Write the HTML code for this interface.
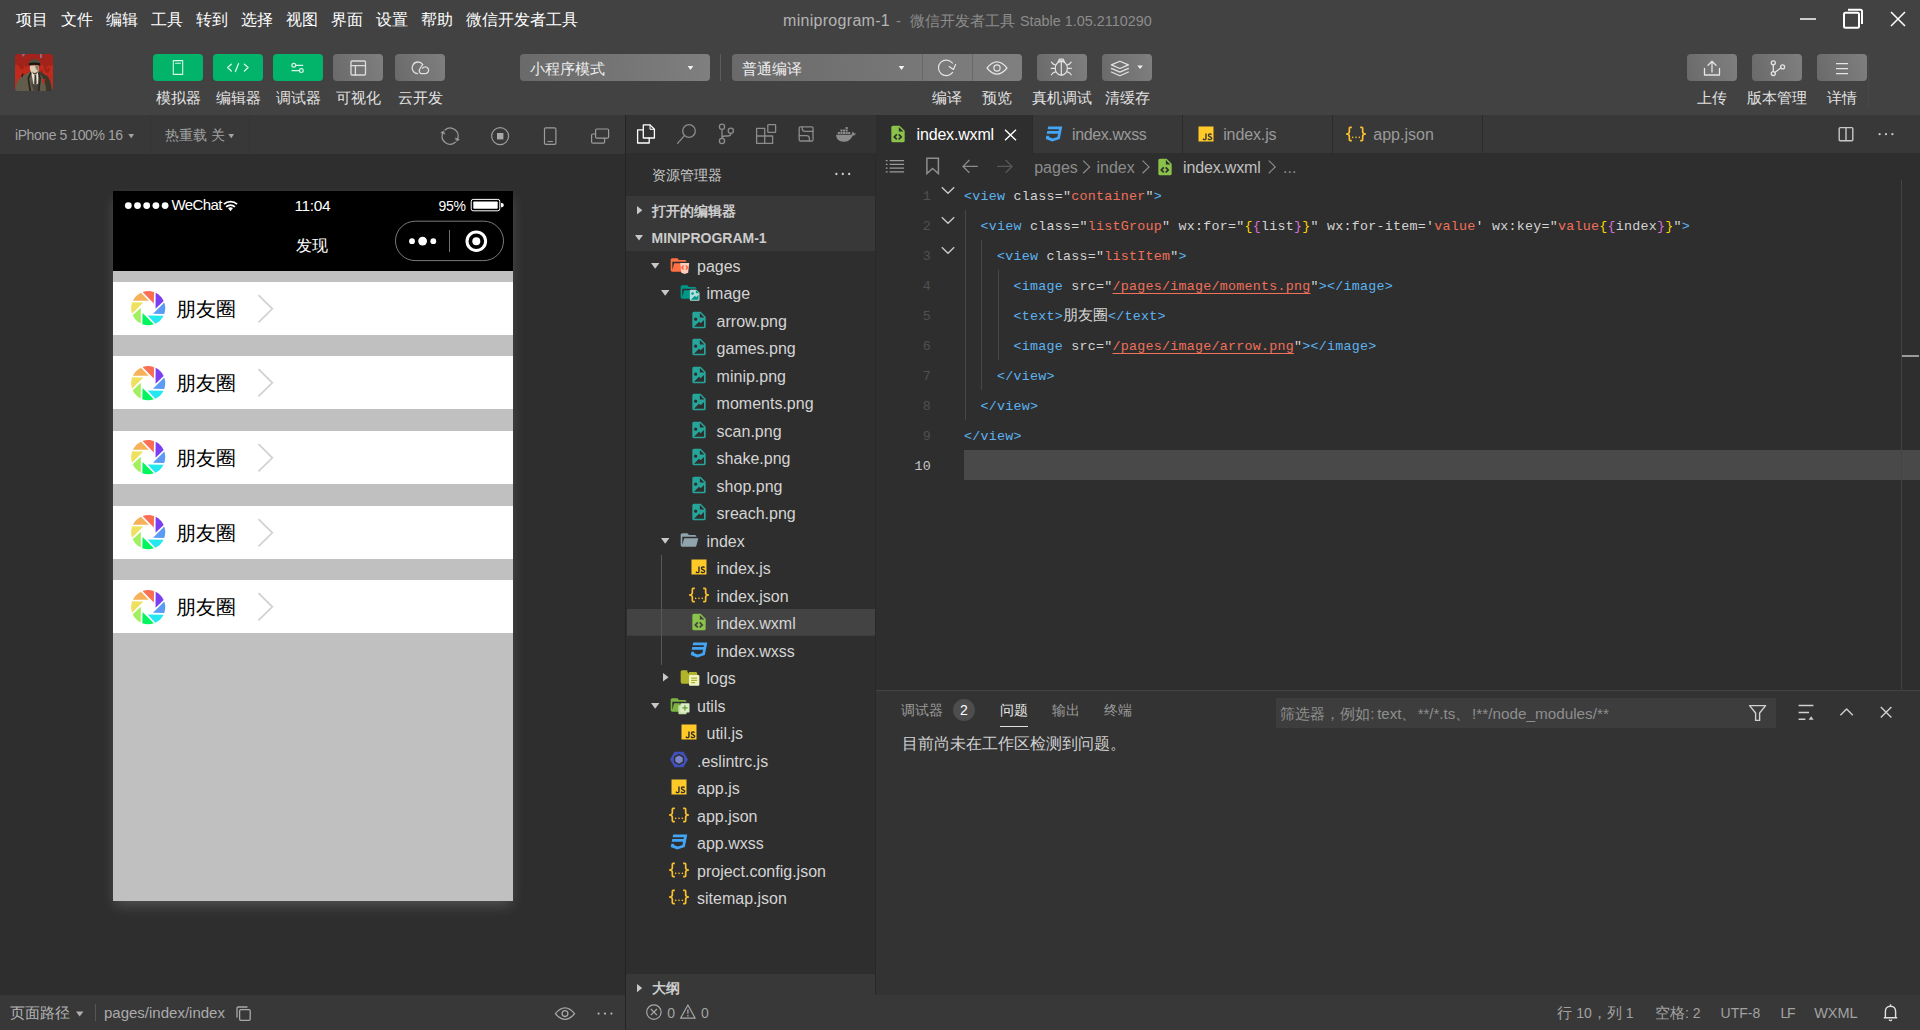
<!DOCTYPE html>
<html lang="zh">
<head>
<meta charset="utf-8">
<title>miniprogram-1</title>
<style>
*{box-sizing:border-box;margin:0;padding:0}
html,body{width:1920px;height:1030px;overflow:hidden;background:#2e2e2e}
body{font-family:"Liberation Sans",sans-serif;color:#d6d6d6;position:relative;font-size:15px}
.abs{position:absolute}
svg{display:block;overflow:visible}
/* top */
#top{position:absolute;left:0;top:0;width:1920px;height:115px;background:#424242}
.menu{position:absolute;top:9px;height:22px;line-height:22px;font-size:16px;color:#fff;white-space:nowrap}
#title{position:absolute;top:9px;left:782px;height:22px;line-height:22px;font-size:16px;color:#8c8c8c;white-space:nowrap}
#title b{font-weight:normal;color:#b4b4b4}
.tb{position:absolute;top:54px;width:50px;height:27px;border-radius:4px;background:linear-gradient(75deg,#6a6a6a,#7f7f7f)}
.tb.g{background:#02b36a}
.tl{position:absolute;top:88px;height:20px;line-height:20px;font-size:15px;color:#e2e2e2;white-space:nowrap;text-align:center}
.dd{position:absolute;top:54px;height:27px;background:linear-gradient(85deg,#6a6a6a,#7f7f7f);border-radius:4px;color:#eee;font-size:15px;line-height:30px;padding-left:10px}
/* simulator */
#simbar{position:absolute;left:0;top:115px;width:625px;height:39px;background:#383838}
#sim{position:absolute;left:0;top:154px;width:625px;height:841px;background:#2e2e2e}
#vsep{position:absolute;left:625px;top:115px;width:1.4px;height:915px;background:#242424}
#simfoot{position:absolute;left:0;top:995px;width:625px;height:35px;background:#383838}
/* phone */
#phone{position:absolute;left:113px;top:191px;width:400px;height:709.7px;background:#c0c0c0;box-shadow:0 6px 13px -2px rgba(255,255,255,.19)}
#phead{position:absolute;left:0;top:0;width:400px;height:80px;background:#000}
.li{position:absolute;left:0;width:400px;height:53px;background:#fff}
/* explorer */
#actbar{position:absolute;left:626px;top:115px;width:250px;height:38px;background:#333}
#exp{position:absolute;left:627px;top:154px;width:249px;height:841px}
#esep{position:absolute;left:875px;top:153px;width:1px;height:842px;background:#292929}
.row{position:absolute;left:0;width:248px;height:27.5px;line-height:29px;font-size:16px;color:#d4d4d4;white-space:nowrap}
.row.sel{background:linear-gradient(#434343,#434343) -1px -0.3px/250px 27px no-repeat}
/* editor */
#tabs{position:absolute;left:877px;top:115px;width:1043px;height:38px;background:#383838}
#editor{position:absolute;left:877px;top:153px;width:1043px;height:537px;background:#2e2e2e}
.ln{position:absolute;left:0;width:54px;text-align:right;font-family:"Liberation Mono",monospace;font-size:13.3333px;letter-spacing:.25px;color:#505050;height:30px;line-height:30px}
.cl{position:absolute;left:87px;height:30px;line-height:30px;font-family:"Liberation Mono",monospace;font-size:13.3333px;letter-spacing:.25px;white-space:pre;color:#d4d4d4}
.t{color:#5cb3f0}.s{color:#f0705a}.a{color:#d4d4d4}.y{color:#ffd700}.p{color:#da70d6}
.tt{top:9px;line-height:22px;font-size:16px;color:#9a9a9a;white-space:nowrap}
.bc{top:5px;line-height:20px;font-size:16px;color:#8c8c8c;white-space:nowrap}
.ln.act{color:#c8c8c8}
.u{text-decoration:underline;text-underline-offset:3px;text-decoration-thickness:1px}
.cj{font-family:"Liberation Sans",sans-serif;font-size:15px;line-height:1px;letter-spacing:0;display:inline-block;width:45px;text-align-last:justify;white-space:nowrap}
.pt{top:8.5px;line-height:20px;font-size:14px;color:#9a9a9a;white-space:nowrap}
.ph{top:12.7px;line-height:20px;font-size:15px;color:#8e8e8e;white-space:nowrap}
.st{top:7.5px;line-height:20px;font-size:14px;color:#a2a2a2;white-space:nowrap}
.j{display:inline-block;text-align-last:justify;white-space:nowrap}
/* panel */
#panel{position:absolute;left:877px;top:690px;width:1043px;height:305px;background:#333;border-top:1px solid #444}
#status{position:absolute;left:627px;top:995px;width:1293px;height:35px;background:#383838}
</style>
</head>
<body>
<div id="top">
<span class="menu" style="left:16px"><span class="j" style="width:32px">项目</span></span>
<span class="menu" style="left:61px"><span class="j" style="width:32px">文件</span></span>
<span class="menu" style="left:106px"><span class="j" style="width:32px">编辑</span></span>
<span class="menu" style="left:151px"><span class="j" style="width:32px">工具</span></span>
<span class="menu" style="left:196px"><span class="j" style="width:32px">转到</span></span>
<span class="menu" style="left:241px"><span class="j" style="width:32px">选择</span></span>
<span class="menu" style="left:286px"><span class="j" style="width:32px">视图</span></span>
<span class="menu" style="left:331px"><span class="j" style="width:32px">界面</span></span>
<span class="menu" style="left:376px"><span class="j" style="width:32px">设置</span></span>
<span class="menu" style="left:421px"><span class="j" style="width:32px">帮助</span></span>
<span class="menu" style="left:466px"><span class="j" style="width:112px">微信开发者工具</span></span>
<span class="abs" style="left:783px;top:9.7px;line-height:22px;font-size:16px;letter-spacing:.3px;color:#b4b4b4;white-space:nowrap">miniprogram-1</span>
<span class="abs" style="left:896px;top:9.7px;line-height:22px;font-size:15px;color:#8c8c8c">-</span>
<span class="abs" style="left:910px;top:9.7px;line-height:22px;font-size:15px;color:#8c8c8c;white-space:nowrap"><span class="j" style="width:105px">微信开发者工具</span></span>
<span class="abs" style="left:1020px;top:9.7px;line-height:22px;font-size:14.4px;color:#8c8c8c;white-space:nowrap">Stable 1.05.2110290</span>
<!-- window controls -->
<svg class="abs" style="left:1795px;top:5px" width="120" height="30" viewBox="1795 5 120 30" fill="none" stroke="#fff" stroke-width="1.6">
<path d="M1800 19H1816" stroke="#ccc" stroke-width="2"/>
<rect x="1844" y="12.8" width="15" height="15" rx="1.5" stroke-width="2"/>
<path d="M1848 9.8H1860.5Q1862 9.8 1862 11.3V24" stroke-width="2"/>
<path d="M1891 12L1905 26M1905 12L1891 26" stroke-width="1.5"/>
</svg>
<!-- avatar -->
<svg class="abs" style="left:15px;top:54px" width="38" height="37" viewBox="0 0 38 37">
<defs><clipPath id="avc"><rect width="38" height="37" rx="3.2"/></clipPath><filter id="avb" x="-5%" y="-5%" width="110%" height="110%"><feGaussianBlur stdDeviation=".45"/></filter></defs>
<g clip-path="url(#avc)"><g filter="url(#avb)">
<rect x="-2" y="-2" width="42" height="41" fill="#bf2a1c"/>
<path d="M-1 -1H39V9Q36 14 33 11Q31 17 28 12Q26 8 23 9Q20 4 15 8Q12 16 9 11Q6 17 4 12Q2 9 -1 12Z" fill="#a2231a"/>
<path d="M5 10Q7 18 8 12M30 13Q32 22 34 14M26 16Q28 24 33 22" stroke="#9c2219" stroke-width="2" fill="none"/>
<path d="M6 -1H11L8 3ZM25 0H27V4H25Z" fill="#8a86b8" opacity=".7"/>
<path d="M0 37L1.5 30Q3 24.5 7 22.5L15.5 17.5L17 16H23L24.5 17.5Q31 21 33.5 23.5Q36 27 37.5 37Z" fill="#625d4b"/>
<path d="M24 17.5Q31 21 33.5 23.5Q36 28 37 37H31Q31 26 24 19Z" fill="#3b352b"/>
<path d="M7 22.5L8 19.5L6.8 23Z" fill="#1c1814" stroke="#1c1814" stroke-width="1.2"/>
<path d="M16.2 18.5L18.5 30H22.8L23.6 18.5Z" fill="#ece5d6"/>
<path d="M19.6 20.6H21.2L21.6 29.6L20.4 30.4L19.2 29.6Z" fill="#3a3832"/>
<path d="M15.8 28L18.8 37H24L25.4 27L22 31H19Z" fill="#47433a"/>
<path d="M15.6 17.6L12.4 24L14.2 37H16.2L14.2 24.5L16.6 19.5Z" fill="#2c2820"/>
<path d="M23.8 17.6L26 24L24.6 37H23L24.4 25L23 19.6Z" fill="#2c2820"/>
<path d="M15 11.5Q14.2 16 17 19Q20 21.2 22.6 19Q24.2 16 23.8 11.5Z" fill="#d9cdb6"/>
<path d="M17.2 17.4Q20 20.6 22.8 17.2Q23 19.6 20 20.6Q17.4 20 17.2 17.4Z" fill="#5d4634"/>
<path d="M20 11.5H23.8Q24 14 23 17L21 15Z" fill="#8d7c66"/>
<path d="M13.8 11.4Q13.4 7.4 16.4 6Q20 4.6 23.6 6.2Q25.6 7.6 25.4 11Q19.6 9.4 13.8 11.4Z" fill="#4d4c3e"/>
<path d="M13.8 11.6Q13.4 9.4 14.6 9Q19.6 7.8 25 9.2Q25.8 10.2 25.2 11.8Q19.6 9.8 13.8 11.6Z" fill="#15140f"/>
<path d="M27 25L31 25.4L29 27.6L30 30L27.8 29.4L27.4 27Z" fill="#c62a1e"/>
</g></g>
</svg>
<!-- left buttons -->
<div class="tb g" style="left:153px"></div>
<div class="tb g" style="left:213px"></div>
<div class="tb g" style="left:273px"></div>
<div class="tb" style="left:333px"></div>
<div class="tb" style="left:395px"></div>
<svg class="abs" style="left:150px;top:50px" width="300" height="35" viewBox="150 50 300 35" fill="none" stroke="#fff" stroke-width="1.2" stroke-linecap="round" stroke-linejoin="round">
<g stroke="#d9f5e8">
<rect x="173.3" y="60.6" width="9.4" height="13.8" stroke-width="1.1"/>
<path d="M175.5 63.3H180.5" stroke-width="1.1"/>
<path d="M231.3 64.2L227.6 67.6L231.3 71M238.6 63.6L235.4 71.6M244.4 64.2L248.1 67.6L244.4 71" stroke-width="1.3"/>
<circle cx="293.8" cy="65.3" r="1.9"/><path d="M295.8 65.3H302.8"/>
<circle cx="301.3" cy="70.6" r="1.9"/><path d="M292 70.6H299.3"/>
</g>
<g stroke="#dcdcdc">
<rect x="351" y="61" width="14.5" height="14" rx="1" stroke-width="1.3"/>
<path d="M351 65.6H365.5M355.4 65.6V75" stroke-width="1.3"/>
<path d="M417.5 73.6A5.8 5.8 0 1 1 422.8 64.6Q421 66.5 419.5 69.5Q418.6 72.5 421 73.6H425.3A3.4 3.4 0 1 0 422.5 68.2" stroke-width="1.3"/>
</g>
</svg>
<span class="tl" style="left:148px;width:60px"><span class="j" style="width:45px">模拟器</span></span>
<span class="tl" style="left:208px;width:60px"><span class="j" style="width:45px">编辑器</span></span>
<span class="tl" style="left:268px;width:60px"><span class="j" style="width:45px">调试器</span></span>
<span class="tl" style="left:328px;width:60px"><span class="j" style="width:45px">可视化</span></span>
<span class="tl" style="left:390px;width:60px"><span class="j" style="width:45px">云开发</span></span>
<!-- dropdowns -->
<div class="dd" style="left:520px;width:190px"><span class="j" style="width:75px">小程序模式</span></div>
<div class="abs" style="left:720px;top:54px;width:1px;height:27px;background:#5c5c5c"></div>
<div class="dd" style="left:732px;width:290px"><span class="j" style="width:60px">普通编译</span></div>
<div class="abs" style="left:922px;top:54px;width:1px;height:27px;background:#686868"></div>
<div class="abs" style="left:972px;top:54px;width:1px;height:27px;background:#686868"></div>
<div class="tb" style="left:1037px"></div>
<div class="tb" style="left:1102px"></div>
<svg class="abs" style="left:680px;top:50px" width="480" height="35" viewBox="680 50 480 35" fill="none" stroke="#e4e4e4" stroke-width="1.2" stroke-linecap="round" stroke-linejoin="round">
<path d="M687.7 66H693.3L690.5 70Z" fill="#f2f2f2" stroke="none"/>
<path d="M898.7 66H904.3L901.5 70Z" fill="#f2f2f2" stroke="none"/>
<path d="M1137.3 65.5H1142.9L1140.1 69Z" fill="#f2f2f2" stroke="none"/>
<!-- refresh -->
<path d="M952.6 72.4A7.8 7.8 0 1 1 952.4 63"/>
<path d="M949.2 66.6L953.4 69.4L955.6 64.6"/>
<!-- eye -->
<path d="M987 68Q992 61.8 997 61.8Q1002 61.8 1007 68Q1002 74.2 997 74.2Q992 74.2 987 68Z"/>
<circle cx="997" cy="68" r="3.1"/>
<!-- bug -->
<ellipse cx="1061.3" cy="68.3" rx="6.1" ry="6.9"/>
<path d="M1061.3 61.4V75.2"/>
<path d="M1058 62.2L1059.4 59.2H1063.2L1064.6 62.2M1058.6 60.9H1064"/>
<path d="M1055.6 65Q1053 64.6 1051.4 62.2M1055.2 68.3H1051.2M1055.6 71.8Q1053 72.2 1051.4 74.8M1067 65Q1069.6 64.6 1071.2 62.2M1067.4 68.3H1071.4M1067 71.8Q1069.6 72.2 1071.2 74.8"/>
<!-- layers -->
<path d="M1119.9 61.3L1128.4 64.9L1119.9 68.5L1111.4 64.9Z"/>
<path d="M1111.4 68.4L1119.9 72.1L1128.4 68.4M1111.4 72L1119.9 75.7L1128.4 72"/>
</svg>
<span class="tl" style="left:917px;width:60px"><span class="j" style="width:30px">编译</span></span>
<span class="tl" style="left:967px;width:60px"><span class="j" style="width:30px">预览</span></span>
<span class="tl" style="left:1022px;width:80px"><span class="j" style="width:60px">真机调试</span></span>
<span class="tl" style="left:1097px;width:60px"><span class="j" style="width:45px">清缓存</span></span>
<!-- right buttons -->
<div class="tb" style="left:1687px"></div>
<div class="tb" style="left:1752px"></div>
<div class="tb" style="left:1817px"></div>
<div class="abs" style="left:1868px;top:54px;width:1px;height:53px;background:#484848"></div>
<svg class="abs" style="left:1680px;top:50px" width="200" height="35" viewBox="1680 50 200 35" fill="none" stroke="#e4e4e4" stroke-width="1.3" stroke-linecap="round" stroke-linejoin="round">
<path d="M1704.5 68.5V75H1719.5V68.5"/>
<path d="M1712 72V61.5M1708 65.3L1712 61.3L1716 65.3"/>
<circle cx="1773.3" cy="62.8" r="2"/><circle cx="1773.3" cy="73.6" r="2"/><circle cx="1782.6" cy="66.9" r="2"/>
<path d="M1773.3 64.8V71.6M1774.9 72.4L1780.8 67.9"/>
<path d="M1836 63.7H1848M1836 68.7H1848M1836 73.7H1848" stroke-linecap="butt"/>
</svg>
<span class="tl" style="left:1682px;width:60px"><span class="j" style="width:30px">上传</span></span>
<span class="tl" style="left:1737px;width:80px"><span class="j" style="width:60px">版本管理</span></span>
<span class="tl" style="left:1812px;width:60px"><span class="j" style="width:30px">详情</span></span>
</div>
<div id="simbar">
<span class="abs" style="left:15px;top:10px;line-height:20px;font-size:14px;letter-spacing:-.42px;color:#a2a2a2;white-space:nowrap">iPhone 5 100% 16</span>
<span class="abs" style="left:165px;top:10px;line-height:20px;font-size:14px;color:#a2a2a2;white-space:nowrap"><span class="j" style="width:42px">热重载</span> <span class="j" style="width:14px">关</span></span>
<div class="abs" style="left:150px;top:0;width:1px;height:39px;background:#343434"></div>
<div class="abs" style="left:249px;top:0;width:1px;height:39px;background:#343434"></div>
<svg class="abs" style="left:0;top:0" width="625" height="39" viewBox="0 115 625 39" fill="none" stroke="#9c9c9c" stroke-width="1.2" stroke-linecap="round" stroke-linejoin="round">
<path d="M128.3 134H134.1L131.2 138.3Z" fill="#a2a2a2" stroke="none"/>
<path d="M228.3 134H234.1L231.2 138.3Z" fill="#a2a2a2" stroke="none"/>
<!-- refresh -->
<path d="M444.96 129.97A8 8 0 0 1 457.62 138.84M455.24 142.23A8 8 0 0 1 442.58 133.36"/>
<path d="M456.85 141.1L459.4 139.5L455.7 138.1ZM443.33 131.1L440.8 132.66L444.5 134.06Z" fill="#9c9c9c" stroke-width=".6"/>
<!-- stop -->
<circle cx="500.1" cy="136.1" r="8.5"/>
<rect x="497" y="133" width="6.4" height="6.4" fill="#a8a8a8" stroke="none"/>
<!-- phone -->
<rect x="544.5" y="127.8" width="11.4" height="16.6" rx="1.4"/>
<path d="M548 141.5H552.4"/>
<!-- windows -->
<path d="M595.4 143.2H592.8Q591.6 143.2 591.6 142V135.2Q591.6 134 592.8 134H595.4M604.6 138.4V142Q604.6 143.2 603.4 143.2H595.4"/>
<rect x="595.6" y="129" width="13" height="9.2" rx="1.2"/>
</svg>
</div>
<div id="sim"></div>
<div id="simfoot">
<span class="abs" style="left:10px;top:7.8px;line-height:20px;font-size:15px;color:#b4b4b4;white-space:nowrap"><span class="j" style="width:60px">页面路径</span></span>
<div class="abs" style="left:95px;top:9px;width:1px;height:17px;background:#555"></div>
<span class="abs" style="left:104px;top:7.8px;line-height:20px;font-size:15px;color:#ababab;white-space:nowrap">pages/index/index</span>
<svg class="abs" style="left:0;top:0" width="625" height="35" viewBox="0 995 625 35" fill="none" stroke="#a8a8a8" stroke-width="1.3" stroke-linecap="round" stroke-linejoin="round">
<path d="M76 1011.5H83.4L79.7 1016.5Z" fill="#b0b0b0" stroke="none"/>
<rect x="239.6" y="1009.6" width="10.6" height="10.8" rx="1.4"/>
<path d="M237 1017V1008.2Q237 1007 238.2 1007H247"/>
<path d="M555.4 1013.6Q560 1007.8 565 1007.8Q570 1007.8 574.6 1013.6Q570 1019.4 565 1019.4Q560 1019.4 555.4 1013.6Z"/>
<circle cx="565" cy="1013.6" r="2.9"/>
<g fill="#b4b4b4" stroke="none"><circle cx="598.6" cy="1013.6" r="1.1"/><circle cx="605" cy="1013.6" r="1.1"/><circle cx="611.4" cy="1013.6" r="1.1"/></g>
</svg>
</div>
<div id="phone">
<svg width="0" height="0" style="position:absolute"><defs>
<g id="mom"><path d="M-5.7 -16.4A17.4 17.4 0 0 1 6 -16.3L5.7 -4.9Z" fill="#fb6e52" transform="rotate(0)"/><path d="M-5.7 -16.4A17.4 17.4 0 0 1 6 -16.3L5.7 -4.9Z" fill="#7b3ff2" transform="rotate(45)"/><path d="M-5.7 -16.4A17.4 17.4 0 0 1 6 -16.3L5.7 -4.9Z" fill="#5b9bf5" transform="rotate(90)"/><path d="M-5.7 -16.4A17.4 17.4 0 0 1 6 -16.3L5.7 -4.9Z" fill="#24e8f0" transform="rotate(135)"/><path d="M-5.7 -16.4A17.4 17.4 0 0 1 6 -16.3L5.7 -4.9Z" fill="#00f55f" transform="rotate(180)"/><path d="M-5.7 -16.4A17.4 17.4 0 0 1 6 -16.3L5.7 -4.9Z" fill="#a0f060" transform="rotate(225)"/><path d="M-5.7 -16.4A17.4 17.4 0 0 1 6 -16.3L5.7 -4.9Z" fill="#eee160" transform="rotate(270)"/><path d="M-5.7 -16.4A17.4 17.4 0 0 1 6 -16.3L5.7 -4.9Z" fill="#f5b25a" transform="rotate(315)"/></g>
</defs></svg>
<div id="phead">
<svg class="abs" style="left:0;top:0" width="400" height="80" viewBox="113 191 400 80" fill="#fff">
<circle cx="128.3" cy="205.6" r="3.4"/><circle cx="137.5" cy="205.6" r="3.4"/><circle cx="146.7" cy="205.6" r="3.4"/><circle cx="155.9" cy="205.6" r="3.4"/><circle cx="165.1" cy="205.6" r="3.4"/>
<!-- wifi -->
<g fill="none" stroke="#fff" stroke-width="1.8" stroke-linecap="butt">
<path d="M223.9 204.1A10.15 10.15 0 0 1 237.1 204.1"/>
<path d="M226.1 206.8A6.4 6.4 0 0 1 234.9 206.8"/>
</g>
<path d="M228 208Q230.5 206.7 233 208L230.5 211.3Z"/>
<!-- battery -->
<rect x="471.2" y="199.4" width="28.6" height="11.4" rx="2" fill="none" stroke="#fff" stroke-width="1"/>
<rect x="473.3" y="201.5" width="24.4" height="7.2" rx=".8"/>
<path d="M501 203H502Q503.8 203.4 503.8 205.1Q503.8 206.8 502 207.2H501Z"/>
<!-- capsule -->
<rect x="395.5" y="221.2" width="108" height="39.4" rx="19.7" fill="none" stroke="#7a7a7a" stroke-width="1"/>
<circle cx="412" cy="241.2" r="2.9"/><circle cx="422.6" cy="241.1" r="4.4"/><circle cx="433.3" cy="241.2" r="2.9"/>
<path d="M449.5 230V252" stroke="#6e6e6e" stroke-width="1"/>
<circle cx="476.3" cy="241.2" r="9.3" fill="none" stroke="#fff" stroke-width="3"/>
<circle cx="476.3" cy="241.2" r="4"/>
</svg>
<span class="abs" style="left:58.5px;top:3.7px;line-height:20px;font-size:15px;letter-spacing:-.6px;color:#fff;white-space:nowrap">WeChat</span>
<span class="abs" style="left:181.5px;top:4.6px;line-height:20px;font-size:15.5px;letter-spacing:-.4px;color:#fff;white-space:nowrap">11:04</span>
<span class="abs" style="left:325.5px;top:5px;line-height:20px;font-size:14px;letter-spacing:-.3px;color:#fff;white-space:nowrap">95%</span>
<span class="abs" style="left:183.4px;top:44.2px;line-height:22px;font-size:16px;color:#fff;white-space:nowrap"><span class="j" style="width:32px">发现</span></span>
</div>
<div class="li" style="top:90.67px"><svg class="abs" style="left:18.2px;top:9.4px" width="34.4" height="34.4" viewBox="-17.5 -17.5 35 35"><use href="#mom"/></svg><span class="abs" style="left:63px;top:13px;line-height:28px;font-size:20px;color:#000;white-space:nowrap"><span class="j" style="width:60px">朋友圈</span></span><svg class="abs" style="left:143px;top:12px" width="18" height="30" viewBox="0 0 18 30" fill="none" stroke="#d2d2d2" stroke-width="1.8"><path d="M2.5 1.2L16.3 14.8L2.5 28.4"/></svg></div>
<div class="li" style="top:165.34px"><svg class="abs" style="left:18.2px;top:9.4px" width="34.4" height="34.4" viewBox="-17.5 -17.5 35 35"><use href="#mom"/></svg><span class="abs" style="left:63px;top:13px;line-height:28px;font-size:20px;color:#000;white-space:nowrap"><span class="j" style="width:60px">朋友圈</span></span><svg class="abs" style="left:143px;top:12px" width="18" height="30" viewBox="0 0 18 30" fill="none" stroke="#d2d2d2" stroke-width="1.8"><path d="M2.5 1.2L16.3 14.8L2.5 28.4"/></svg></div>
<div class="li" style="top:240.01px"><svg class="abs" style="left:18.2px;top:9.4px" width="34.4" height="34.4" viewBox="-17.5 -17.5 35 35"><use href="#mom"/></svg><span class="abs" style="left:63px;top:13px;line-height:28px;font-size:20px;color:#000;white-space:nowrap"><span class="j" style="width:60px">朋友圈</span></span><svg class="abs" style="left:143px;top:12px" width="18" height="30" viewBox="0 0 18 30" fill="none" stroke="#d2d2d2" stroke-width="1.8"><path d="M2.5 1.2L16.3 14.8L2.5 28.4"/></svg></div>
<div class="li" style="top:314.68px"><svg class="abs" style="left:18.2px;top:9.4px" width="34.4" height="34.4" viewBox="-17.5 -17.5 35 35"><use href="#mom"/></svg><span class="abs" style="left:63px;top:13px;line-height:28px;font-size:20px;color:#000;white-space:nowrap"><span class="j" style="width:60px">朋友圈</span></span><svg class="abs" style="left:143px;top:12px" width="18" height="30" viewBox="0 0 18 30" fill="none" stroke="#d2d2d2" stroke-width="1.8"><path d="M2.5 1.2L16.3 14.8L2.5 28.4"/></svg></div>
<div class="li" style="top:389.35px"><svg class="abs" style="left:18.2px;top:9.4px" width="34.4" height="34.4" viewBox="-17.5 -17.5 35 35"><use href="#mom"/></svg><span class="abs" style="left:63px;top:13px;line-height:28px;font-size:20px;color:#000;white-space:nowrap"><span class="j" style="width:60px">朋友圈</span></span><svg class="abs" style="left:143px;top:12px" width="18" height="30" viewBox="0 0 18 30" fill="none" stroke="#d2d2d2" stroke-width="1.8"><path d="M2.5 1.2L16.3 14.8L2.5 28.4"/></svg></div>
</div>
<div id="actbar">
<svg class="abs" style="left:0;top:0" width="250" height="39" viewBox="626 115 250 39" fill="none" stroke="#8c8c8c" stroke-width="1.3" stroke-linejoin="round" stroke-linecap="round">
<!-- files -->
<g stroke="#fff" stroke-width="1.3">
<path d="M643.3 124.9H650L654.4 129.3V138H643.3Z"/>
<path d="M650 124.9V129.3H654.4" stroke-width="1"/>
<path d="M643.3 129.9H637.6V143H649.2V138"/>
</g>
<!-- search -->
<circle cx="689" cy="131" r="6.3"/>
<path d="M684.4 135.6L677.6 143.4"/>
<!-- git -->
<circle cx="722" cy="126.8" r="2.6"/><circle cx="722" cy="141" r="2.6"/><circle cx="730.8" cy="130.8" r="2.6"/>
<path d="M722 129.4V138.4M730.8 133.4Q730.8 136 727.5 136H725Q722 136 722 138.4"/>
<!-- extensions -->
<path d="M756.6 128.4H764.7V143.4H756.6ZM756.6 136H772.6V143.4H764.7"/>
<rect x="767.8" y="124.6" width="7.8" height="7.8" rx=".6"/>
<!-- save-like -->
<rect x="799.2" y="126.8" width="13.8" height="14.2" rx="1.2"/>
<path d="M802.2 126.8V129Q802.4 131.4 805 131.4H813M799.2 135.6H806.6Q809.4 135.8 809.4 138.4V141"/>
<!-- docker -->
<g fill="#8c8c8c" stroke="none">
<path d="M836 134.8H851.2Q852.6 133.6 852.2 131.4Q853.6 132 854.2 133.4Q855.4 133 856 133.6Q855 135.8 852.6 135.8Q850 142 843.6 141.8Q836.6 141.8 836 134.8Z"/>
<rect x="837.8" y="132" width="2.1" height="2"/><rect x="840.4" y="132" width="2.1" height="2"/><rect x="843" y="132" width="2.1" height="2"/><rect x="845.6" y="132" width="2.1" height="2"/><rect x="848.2" y="132" width="2.1" height="2"/>
<rect x="840.4" y="129.5" width="2.1" height="2"/><rect x="843" y="129.5" width="2.1" height="2"/><rect x="845.6" y="129.5" width="2.1" height="2"/>
<rect x="845.6" y="127" width="2.1" height="2"/>
</g>
</svg>
</div>
<div id="exp">
<svg width="0" height="0" style="position:absolute"><defs>
<path id="i-img" d="M13 9h5.5L13 3.5V9M6 2h8l6 6v12a2 2 0 0 1-2 2H6a2 2 0 0 1-2-2V4c0-1.11.89-2 2-2m0 18h12v-8l-4 4-2-2-6 6M8 9a2 2 0 0 0-2 2 2 2 0 0 0 2 2 2 2 0 0 0 2-2 2 2 0 0 0-2-2z" fill="#26a69a"/>
<path id="i-js" d="M3 3h18v18H3V3m4.73 15.04c.4.85 1.19 1.55 2.54 1.55 1.5 0 2.53-.8 2.53-2.55v-5.78h-1.7V17c0 .86-.35 1.08-.9 1.08-.58 0-.82-.4-1.09-.87l-1.38.83m5.98-.18c.5.98 1.51 1.73 3.09 1.73 1.6 0 2.8-.83 2.8-2.36 0-1.41-.81-2.04-2.25-2.66l-.42-.18c-.73-.31-1.04-.52-1.04-1.02 0-.41.31-.73.81-.73.48 0 .8.21 1.09.73l1.31-.87c-.55-.96-1.33-1.33-2.4-1.33-1.51 0-2.48.96-2.48 2.23 0 1.38.81 2.03 2.03 2.55l.42.18c.78.34 1.24.55 1.24 1.13 0 .48-.45.83-1.15.83-.83 0-1.31-.43-1.67-1.03l-1.38.8z" fill="#ffca28"/>
<path id="i-json" d="M5 3h2v2H5v5a2 2 0 0 1-2 2 2 2 0 0 1 2 2v5h2v2H5c-1.07-.27-2-.9-2-2v-4a2 2 0 0 0-2-2H0v-2h1a2 2 0 0 0 2-2V5a2 2 0 0 1 2-2m14 0a2 2 0 0 1 2 2v4a2 2 0 0 0 2 2h1v2h-1a2 2 0 0 0-2 2v4a2 2 0 0 1-2 2h-2v-2h2v-5a2 2 0 0 1 2-2 2 2 0 0 1-2-2V5h-2V3h2m-7 12a1 1 0 0 1 1 1 1 1 0 0 1-1 1 1 1 0 0 1-1-1 1 1 0 0 1 1-1m-4 0a1 1 0 0 1 1 1 1 1 0 0 1-1 1 1 1 0 0 1-1-1 1 1 0 0 1 1-1m8 0a1 1 0 0 1 1 1 1 1 0 0 1-1 1 1 1 0 0 1-1-1 1 1 0 0 1 1-1z" fill="#fbc02d"/>
<path id="i-css" d="M5 3l-.65 3.34h13.59L17.5 8.5H3.92l-.66 3.33h13.59l-.76 3.81-5.48 1.81-4.75-1.81.33-1.64H2.85l-.79 4 7.85 3 9.05-3 1.2-6.03.24-1.21L21.94 3H5z" fill="#42a5f5"/>
<path id="i-xml" d="M13 9h5.5L13 3.5V9M6 2h8l6 6v12a2 2 0 0 1-2 2H6a2 2 0 0 1-2-2V4c0-1.11.89-2 2-2m.12 13.5l3.74 3.74 1.42-1.41-2.33-2.33 2.33-2.33-1.42-1.41-3.74 3.74m11.16 0l-3.74-3.74-1.42 1.41 2.33 2.33-2.33 2.33 1.42 1.41 3.74-3.74z" fill="#8bc34a"/>
<g id="i-eslint"><path d="M1.2 11.4L6.6 2.1H17.4L22.8 11.4L17.4 20.7H6.6Z" fill="#4250be"/><path d="M12 4.4L18.1 7.9V14.9L12 18.4L5.9 14.9V7.9Z" fill="#2e2e2e"/><path d="M12 6.5L16.5 9V13.9L12 16.4L7.5 13.9V9Z" fill="#7986cb"/></g>
<path id="f-open" d="M19 20H4a2 2 0 0 1-2-2V6c0-1.11.89-2 2-2h6l2 2h7a2 2 0 0 1 2 2H4v10l2.14-8h17.07l-2.28 8.5c-.23.87-1.01 1.5-1.93 1.5z"/>
<path id="f-closed" d="M10 4H4c-1.11 0-2 .89-2 2v12a2 2 0 0 0 2 2h16a2 2 0 0 0 2-2V8a2 2 0 0 0-2-2h-8l-2-2z"/>
<g id="f-pages"><path d="M17.5 20H4a2 2 0 0 1-2-2V6c0-1.11.89-2 2-2h6l2 2h7a2 2 0 0 1 2 2H4v10l2.14-8H21.5V20z" fill="#ff7043"/><path d="M13.5 9.6H24.2L23 21.2L18.9 22.8L14.7 21.2Z" fill="#ffccbc"/><path d="M17.5 12.6L15.4 15L17.5 17.4M20.3 12.6L22.4 15L20.3 17.4" fill="none" stroke="#ff5a2c" stroke-width="1.5"/></g>
<g id="f-image"><path d="M14 20H4a2 2 0 0 1-2-2V6c0-1.11.89-2 2-2h6l2 2h7a2 2 0 0 1 2 2H4v10l2.14-8H14V20z" fill="#009688"/><path d="M14.2 9.2H20.8L24.6 13V21.4Q24.6 22.6 23.4 22.6H14.2Q13 22.6 13 21.4V10.4Q13 9.2 14.2 9.2Z" fill="#b2dfdb"/><path d="M20.3 9.6V13.4H24.2Z" fill="#009688"/><circle cx="16.2" cy="13.8" r="1.5" fill="#009688"/><path d="M14.2 21.4L19 16.6L20.6 18.2L23.4 15.4V21.4Z" fill="#009688"/></g>
<g id="f-logs"><path d="M10 4H4c-1.11 0-2 .89-2 2v12a2 2 0 0 0 2 2h9V8H12l-2-2z" fill="#afb42b"/><path d="M12 6H20a2 2 0 0 1 2 2v2H12z" fill="#afb42b"/><rect x="12" y="9.6" width="12.4" height="12.8" rx="1.2" fill="#f0f4c3"/><path d="M14.6 13.4H21.8M14.6 16H21.8M14.6 18.6H19.4" stroke="#afb42b" stroke-width="1.5" fill="none"/></g>
<g id="f-utils"><path d="M13 20H4a2 2 0 0 1-2-2V6c0-1.11.89-2 2-2h6l2 2h7a2 2 0 0 1 2 2H4v10l2.14-8H13V20z" fill="#7cb342"/><rect x="11.2" y="12.4" width="10" height="10.6" rx="1" fill="#c5e1a5"/><rect x="13.6" y="9.8" width="11" height="11.2" rx="1" fill="#dcedc8"/><path d="M19.1 12.2V18.6M15.9 15.4H22.3" stroke="#689f38" stroke-width="1.6" fill="none"/></g>
</defs></svg>
<span class="abs" style="left:24.5px;top:11px;line-height:20px;font-size:14px;color:#ccc;white-space:nowrap"><span class="j" style="width:70px">资源管理器</span></span>
<svg class="abs" style="left:208px;top:18px" width="16" height="4" viewBox="0 0 16 4" fill="#d0d0d0"><circle cx="1.4" cy="2" r="1.15"/><circle cx="7.8" cy="2" r="1.15"/><circle cx="14.2" cy="2" r="1.15"/></svg>
<div class="abs" style="left:-1px;top:41.7px;width:249px;height:55.1px;background:#383838"></div>
<svg class="abs" style="left:10.2px;top:52px" width="6" height="9" viewBox="0 0 6 9"><path d="M0 0V8.6L5.4 4.3Z" fill="#c8c8c8"/></svg>
<span class="abs" style="left:24.5px;top:46.5px;line-height:20px;font-size:14px;font-weight:bold;color:#ccc;white-space:nowrap"><span class="j" style="width:84px">打开的编辑器</span></span>
<svg class="abs" style="left:8px;top:81.2px" width="9" height="6" viewBox="0 0 9 6"><path d="M0 0H8L4 5.6Z" fill="#c8c8c8"/></svg>
<span class="abs" style="left:24.5px;top:74px;line-height:20px;font-size:14px;font-weight:bold;color:#ccc;white-space:nowrap">MINIPROGRAM-1</span>
<div class="abs" style="left:34.2px;top:400.5px;width:1px;height:110px;background:#585858;z-index:2"></div>
<div class="row" style="top:97.50px"><svg class="abs" style="left:24.0px;top:11.3px" width="9" height="6" viewBox="0 0 9 6"><path d="M0 0H8.4L4.2 5.8Z" fill="#c8c8c8"/></svg><svg class="abs" style="left:41.9px;top:3.3px" width="20" height="20" viewBox="0 0 24 24"><use href="#f-pages"/></svg><span class="abs" style="left:70.0px;top:0">pages</span></div>
<div class="row" style="top:125.00px"><svg class="abs" style="left:34.0px;top:11.3px" width="9" height="6" viewBox="0 0 9 6"><path d="M0 0H8.4L4.2 5.8Z" fill="#c8c8c8"/></svg><svg class="abs" style="left:52.1px;top:3.3px" width="20" height="20" viewBox="0 0 24 24"><use href="#f-image"/></svg><span class="abs" style="left:79.5px;top:0">image</span></div>
<div class="row" style="top:152.50px"><svg class="abs" style="left:62.2px;top:3.3px" width="20" height="20" viewBox="0 0 24 24"><use href="#i-img"/></svg><span class="abs" style="left:89.6px;top:0">arrow.png</span></div>
<div class="row" style="top:180.00px"><svg class="abs" style="left:62.2px;top:3.3px" width="20" height="20" viewBox="0 0 24 24"><use href="#i-img"/></svg><span class="abs" style="left:89.6px;top:0">games.png</span></div>
<div class="row" style="top:207.50px"><svg class="abs" style="left:62.2px;top:3.3px" width="20" height="20" viewBox="0 0 24 24"><use href="#i-img"/></svg><span class="abs" style="left:89.6px;top:0">minip.png</span></div>
<div class="row" style="top:235.00px"><svg class="abs" style="left:62.2px;top:3.3px" width="20" height="20" viewBox="0 0 24 24"><use href="#i-img"/></svg><span class="abs" style="left:89.6px;top:0">moments.png</span></div>
<div class="row" style="top:262.50px"><svg class="abs" style="left:62.2px;top:3.3px" width="20" height="20" viewBox="0 0 24 24"><use href="#i-img"/></svg><span class="abs" style="left:89.6px;top:0">scan.png</span></div>
<div class="row" style="top:290.00px"><svg class="abs" style="left:62.2px;top:3.3px" width="20" height="20" viewBox="0 0 24 24"><use href="#i-img"/></svg><span class="abs" style="left:89.6px;top:0">shake.png</span></div>
<div class="row" style="top:317.50px"><svg class="abs" style="left:62.2px;top:3.3px" width="20" height="20" viewBox="0 0 24 24"><use href="#i-img"/></svg><span class="abs" style="left:89.6px;top:0">shop.png</span></div>
<div class="row" style="top:345.00px"><svg class="abs" style="left:62.2px;top:3.3px" width="20" height="20" viewBox="0 0 24 24"><use href="#i-img"/></svg><span class="abs" style="left:89.6px;top:0">sreach.png</span></div>
<div class="row" style="top:372.50px"><svg class="abs" style="left:34.0px;top:11.3px" width="9" height="6" viewBox="0 0 9 6"><path d="M0 0H8.4L4.2 5.8Z" fill="#c8c8c8"/></svg><svg class="abs" style="left:52.1px;top:3.3px" width="20" height="20" viewBox="0 0 24 24"><use href="#f-open" fill="#90a4ae"/></svg><span class="abs" style="left:79.5px;top:0">index</span></div>
<div class="row" style="top:400.00px"><svg class="abs" style="left:62.2px;top:3.3px" width="20" height="20" viewBox="0 0 24 24"><use href="#i-js"/></svg><span class="abs" style="left:89.6px;top:0">index.js</span></div>
<div class="row" style="top:427.50px"><svg class="abs" style="left:62.2px;top:3.3px" width="20" height="20" viewBox="0 0 24 24"><use href="#i-json"/></svg><span class="abs" style="left:89.6px;top:0">index.json</span></div>
<div class="row sel" style="top:455.00px"><svg class="abs" style="left:62.2px;top:3.3px" width="20" height="20" viewBox="0 0 24 24"><use href="#i-xml"/></svg><span class="abs" style="left:89.6px;top:0">index.wxml</span></div>
<div class="row" style="top:482.50px"><svg class="abs" style="left:62.2px;top:3.3px" width="20" height="20" viewBox="0 0 24 24"><use href="#i-css"/></svg><span class="abs" style="left:89.6px;top:0">index.wxss</span></div>
<div class="row" style="top:510.00px"><svg class="abs" style="left:36.2px;top:9.4px" width="6" height="9" viewBox="0 0 6 9"><path d="M0 0V8.6L5.6 4.3Z" fill="#c8c8c8"/></svg><svg class="abs" style="left:52.1px;top:3.3px" width="20" height="20" viewBox="0 0 24 24"><use href="#f-logs"/></svg><span class="abs" style="left:79.5px;top:0">logs</span></div>
<div class="row" style="top:537.50px"><svg class="abs" style="left:24.0px;top:11.3px" width="9" height="6" viewBox="0 0 9 6"><path d="M0 0H8.4L4.2 5.8Z" fill="#c8c8c8"/></svg><svg class="abs" style="left:41.9px;top:3.3px" width="20" height="20" viewBox="0 0 24 24"><use href="#f-utils"/></svg><span class="abs" style="left:70.0px;top:0">utils</span></div>
<div class="row" style="top:565.00px"><svg class="abs" style="left:52.1px;top:3.3px" width="20" height="20" viewBox="0 0 24 24"><use href="#i-js"/></svg><span class="abs" style="left:79.5px;top:0">util.js</span></div>
<div class="row" style="top:592.50px"><svg class="abs" style="left:41.9px;top:3.3px" width="20" height="20" viewBox="0 0 24 24"><use href="#i-eslint"/></svg><span class="abs" style="left:70.0px;top:0">.eslintrc.js</span></div>
<div class="row" style="top:620.00px"><svg class="abs" style="left:41.9px;top:3.3px" width="20" height="20" viewBox="0 0 24 24"><use href="#i-js"/></svg><span class="abs" style="left:70.0px;top:0">app.js</span></div>
<div class="row" style="top:647.50px"><svg class="abs" style="left:41.9px;top:3.3px" width="20" height="20" viewBox="0 0 24 24"><use href="#i-json"/></svg><span class="abs" style="left:70.0px;top:0">app.json</span></div>
<div class="row" style="top:675.00px"><svg class="abs" style="left:41.9px;top:3.3px" width="20" height="20" viewBox="0 0 24 24"><use href="#i-css"/></svg><span class="abs" style="left:70.0px;top:0">app.wxss</span></div>
<div class="row" style="top:702.50px"><svg class="abs" style="left:41.9px;top:3.3px" width="20" height="20" viewBox="0 0 24 24"><use href="#i-json"/></svg><span class="abs" style="left:70.0px;top:0">project.config.json</span></div>
<div class="row" style="top:730.00px"><svg class="abs" style="left:41.9px;top:3.3px" width="20" height="20" viewBox="0 0 24 24"><use href="#i-json"/></svg><span class="abs" style="left:70.0px;top:0">sitemap.json</span></div>
<div class="abs" style="left:-1px;top:819.7px;width:249px;height:22px;background:#383838"></div>
<svg class="abs" style="left:10.2px;top:830px" width="6" height="9" viewBox="0 0 6 9"><path d="M0 0V8.2L5.2 4.1Z" fill="#c8c8c8"/></svg>
<span class="abs" style="left:24.5px;top:824px;line-height:20px;font-size:14px;font-weight:bold;color:#ccc;white-space:nowrap"><span class="j" style="width:28px">大纲</span></span>
</div>
<div id="tabs">
<div class="abs" style="left:0;top:0;width:155px;height:38px;background:#2e2e2e"></div>
<div class="abs" style="left:155px;top:0;width:1px;height:38px;background:#2b2b2b"></div>
<div class="abs" style="left:305px;top:0;width:1px;height:38px;background:#2b2b2b"></div>
<div class="abs" style="left:455px;top:0;width:1px;height:38px;background:#2b2b2b"></div>
<div class="abs" style="left:605px;top:0;width:1px;height:38px;background:#2b2b2b"></div>
<svg class="abs" style="left:11.4px;top:9px" width="20" height="20" viewBox="0 0 24 24"><use href="#i-xml"/></svg>
<span class="abs tt" style="left:39.6px;color:#fff;letter-spacing:-.18px">index.wxml</span>
<svg class="abs" style="left:127px;top:13.6px" width="13" height="12" viewBox="0 0 13 12" fill="none" stroke="#fff" stroke-width="1.4"><path d="M1 .8L12 11.2M12 .8L1 11.2"/></svg>
<svg class="abs" style="left:167px;top:9.4px" width="20" height="20" viewBox="0 0 24 24"><use href="#i-css"/></svg>
<span class="abs tt" style="left:195px;letter-spacing:-.38px">index.wxss</span>
<svg class="abs" style="left:318.5px;top:9.4px" width="20" height="20" viewBox="0 0 24 24"><use href="#i-js"/></svg>
<span class="abs tt" style="left:346.2px;letter-spacing:-.12px">index.js</span>
<svg class="abs" style="left:469px;top:9.4px" width="20" height="20" viewBox="0 0 24 24"><use href="#i-json"/></svg>
<span class="abs tt" style="left:496.3px">app.json</span>
<svg class="abs" style="left:950px;top:0" width="93" height="38" viewBox="1827 115 93 38" fill="none" stroke="#c8c8c8" stroke-width="1.4">
<rect x="1839.2" y="127.6" width="13.6" height="13.2" rx="1"/><path d="M1846 127.6V140.8"/>
<g fill="#c8c8c8" stroke="none"><circle cx="1879.6" cy="134.2" r="1.15"/><circle cx="1886" cy="134.2" r="1.15"/><circle cx="1892.4" cy="134.2" r="1.15"/></g>
</svg>
</div>
<div id="editor">
<svg class="abs" style="left:0;top:0" width="440" height="28" viewBox="877 153 440 28" fill="none" stroke="#8c8c8c" stroke-width="1.3">
<g stroke="#9c9c9c" stroke-width="1.2"><path d="M885.8 160.6H887.6M889.6 160.6H904.1M885.8 164.4H887.6M889.6 164.4H904.1M885.8 168.1H887.6M889.6 168.1H904.1M885.8 171.9H887.6M889.6 171.9H904.1"/></g>
<path d="M926.9 158.2H938.4V173.6L932.6 168.4L926.9 173.6Z" stroke-width="1.5" stroke="#8e8e8e"/>
<path d="M977.8 166.4H963M969.4 160L963 166.4L969.4 172.8" stroke="#8c8c8c"/>
<path d="M997.2 166.4H1012M1005.6 160L1012 166.4L1005.6 172.8" stroke="#585858"/>
<path d="M1083.2 160.6L1089.6 166.9L1083.2 173.2M1142.6 160.6L1149 166.9L1142.6 173.2M1268.8 160.6L1275.2 166.9L1268.8 173.2" stroke="#8c8c8c" stroke-width="1.2"/>
</svg>
<span class="abs bc" style="left:157.2px">pages</span>
<span class="abs bc" style="left:219.5px">index</span>
<svg class="abs" style="left:277.8px;top:3.6px" width="20" height="20" viewBox="0 0 24 24"><use href="#i-xml"/></svg>
<span class="abs bc" style="left:306px;color:#c0c0c0;letter-spacing:-.15px">index.wxml</span>
<span class="abs bc" style="left:406px">...</span>
<div class="abs" style="left:87px;top:296.6px;width:956px;height:30px;background:#494949"></div>
<div class="abs" style="left:87.5px;top:57.4px;width:1px;height:209.6px;background:#474747"></div>
<div class="abs" style="left:104px;top:87.4px;width:1px;height:149.6px;background:#474747"></div>
<div class="abs" style="left:120.5px;top:117.4px;width:1px;height:89.6px;background:#474747"></div>
<svg class="abs" style="left:0;top:0" width="100" height="120" viewBox="877 153 100 120" fill="none" stroke="#c8c8c8" stroke-width="1.4"><path d="M941.8 187.2L948 193.2L954.2 187.2M941.8 217.2L948 223.2L954.2 217.2M941.8 247.2L948 253.2L954.2 247.2"/></svg>
<div class="ln" style="top:29.4px">1</div><div class="cl" style="top:29.4px"><span class="t">&lt;view</span> class="<span class="s">container</span>"<span class="t">&gt;</span></div>
<div class="ln" style="top:59.4px">2</div><div class="cl" style="top:59.4px">  <span class="t">&lt;view</span> class="<span class="s">listGroup</span>" wx:for="<span class="y">{</span><span class="p">{</span>list<span class="p">}</span><span class="y">}</span>" wx:for-item='<span class="s">value</span>' wx:key="<span class="s">value</span><span class="y">{</span><span class="p">{</span>index<span class="p">}</span><span class="y">}</span>"<span class="t">&gt;</span></div>
<div class="ln" style="top:89.4px">3</div><div class="cl" style="top:89.4px">    <span class="t">&lt;view</span> class="<span class="s">listItem</span>"<span class="t">&gt;</span></div>
<div class="ln" style="top:119.4px">4</div><div class="cl" style="top:119.4px">      <span class="t">&lt;image</span> src=&quot;<span class="s u">/pages/image/moments.png</span>"<span class="t">&gt;&lt;/image&gt;</span></div>
<div class="ln" style="top:149.4px">5</div><div class="cl" style="top:149.4px">      <span class="t">&lt;text&gt;</span><span class="cj">朋友圈</span><span class="t">&lt;/text&gt;</span></div>
<div class="ln" style="top:179.4px">6</div><div class="cl" style="top:179.4px">      <span class="t">&lt;image</span> src=&quot;<span class="s u">/pages/image/arrow.png</span>"<span class="t">&gt;&lt;/image&gt;</span></div>
<div class="ln" style="top:209.4px">7</div><div class="cl" style="top:209.4px">    <span class="t">&lt;/view&gt;</span></div>
<div class="ln" style="top:239.4px">8</div><div class="cl" style="top:239.4px">  <span class="t">&lt;/view&gt;</span></div>
<div class="ln" style="top:269.4px">9</div><div class="cl" style="top:269.4px"><span class="t">&lt;/view&gt;</span></div>
<div class="ln act" style="top:299.4px">10</div><div class="cl" style="top:299.4px"></div>

<div class="abs" style="left:1024px;top:27px;width:1px;height:509px;background:#444"></div>
<div class="abs" style="left:1025px;top:202px;width:17px;height:2px;background:#9a9a9a"></div>
</div>
<div id="panel">
<span class="abs pt" style="left:24.2px"><span class="j" style="width:42px">调试器</span></span>
<div class="abs" style="left:76px;top:7.5px;width:22px;height:22px;border-radius:11px;background:#4d4d4d;color:#fff;font-size:14px;line-height:22px;text-align:center">2</div>
<span class="abs pt" style="left:123.2px;color:#e8e8e8"><span class="j" style="width:28px">问题</span></span>
<div class="abs" style="left:123.4px;top:35px;width:27.6px;height:1px;background:#e0e0e0"></div>
<span class="abs pt" style="left:175px"><span class="j" style="width:28px">输出</span></span>
<span class="abs pt" style="left:227.4px"><span class="j" style="width:28px">终端</span></span>
<span class="abs" style="left:25.2px;top:41.6px;line-height:22px;font-size:16px;color:#d0d0d0;white-space:nowrap"><span class="j" style="width:224px">目前尚未在工作区检测到问题。</span></span>
<div class="abs" style="left:399px;top:7.2px;width:500px;height:29.5px;background:#3d3d3d"></div>
<span class="abs ph" style="left:403.3px"><span class="j" style="width:90px">筛选器，例如</span>:</span>
<span class="abs ph" style="left:500.2px">text<span class="j" style="width:15px">、</span></span>
<span class="abs ph" style="left:540.7px">**/*.ts<span class="j" style="width:15px">、</span></span>
<span class="abs ph" style="left:595px;font-size:15.3px">!**/node_modules/**</span>
<svg class="abs" style="left:860px;top:0" width="183" height="46" viewBox="1737 691 183 46" fill="none" stroke="#d0d0d0" stroke-width="1.4" stroke-linejoin="round">
<path d="M1749.6 705.6H1765.6L1759.6 713V720.4H1755.6V713Z"/>
<path d="M1798.6 705.6H1813.4M1798.6 712.4H1809M1798.6 719.2H1805.4" stroke-width="1.5"/>
<path d="M1808.6 719.8H1813.6L1811.1 716.2Z" fill="#d0d0d0" stroke="none"/>
<path d="M1840.4 715.2L1846.6 709L1852.8 715.2"/>
<path d="M1880.8 707L1891.4 717.6M1891.4 707L1880.8 717.6"/>
</svg>
</div>
<div id="status">
<svg class="abs" style="left:0;top:0" width="100" height="35" viewBox="627 995 100 35" fill="none" stroke="#a8a8a8" stroke-width="1.2">
<circle cx="653.9" cy="1012.1" r="7.2"/><path d="M650.8 1009L657 1015.2M657 1009L650.8 1015.2"/>
<path d="M687.9 1005L695.2 1018.2H680.6Z" stroke-linejoin="round"/><path d="M687.9 1009.6V1013.8M687.9 1015V1016.4" stroke-width="1.3"/>
</svg>
<span class="abs st" style="left:40.2px">0</span>
<span class="abs st" style="left:74px">0</span>
<span class="abs st" style="left:930.4px"><span style="font-size:15px"><span class="j" style="width:15px">行</span></span> 10<span style="font-size:15px"><span class="j" style="width:30px">，列</span></span> 1</span>
<span class="abs st" style="left:1027.9px"><span style="font-size:15px"><span class="j" style="width:30px">空格</span></span>: 2</span>
<span class="abs st" style="left:1093.6px">UTF-8</span>
<span class="abs st" style="left:1153.4px;letter-spacing:-1.2px">LF</span>
<span class="abs st" style="left:1187.2px;font-size:14.5px">WXML</span>
<svg class="abs" style="left:1255px;top:8px" width="16" height="20" viewBox="1882 1003 16 20" fill="none" stroke="#e0e0e0" stroke-width="1.4" stroke-linejoin="round">
<path d="M1885.4 1017.6V1011.4Q1885.4 1006.4 1890.5 1006.4Q1895.6 1006.4 1895.6 1011.4V1017.6M1883.8 1017.8H1897.2" />
<path d="M1890.5 1006.4V1004.4" stroke-width="1.6"/>
<path d="M1889 1019.6Q1890.5 1021.6 1892 1019.6" stroke-width="1.3"/>
</svg>
</div>
<div class="abs" style="left:626px;top:973.7px;width:2px;height:57px;background:#383838"></div>
<div class="abs" style="left:876px;top:690px;width:1px;height:305px;background:#333;border-top:1px solid #444"></div>
<div id="vsep"></div>
<div id="esep"></div>
</body>
</html>
